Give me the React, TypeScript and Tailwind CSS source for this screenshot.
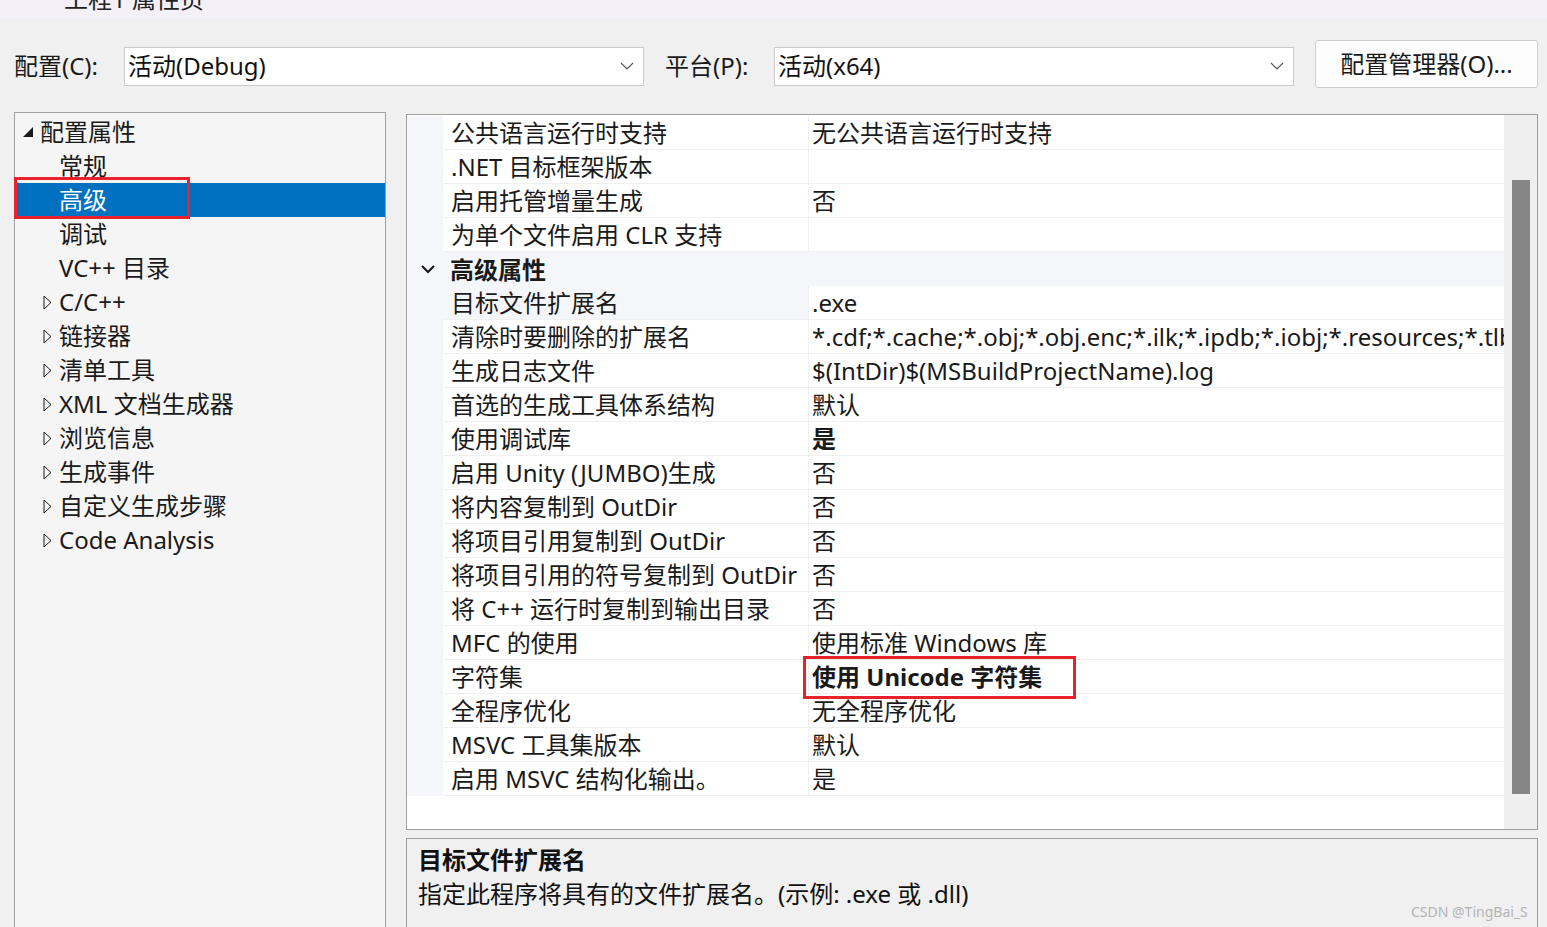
import React from "react";

const FONT = "font-['Noto_Sans','Noto_Sans_CJK_SC',sans-serif]";

type Prop = { name: string; value?: string; bold?: boolean; selected?: boolean; marked?: boolean };

const general: Prop[] = [
  { name: "公共语言运行时支持", value: "无公共语言运行时支持" },
  { name: ".NET 目标框架版本", value: "" },
  { name: "启用托管增量生成", value: "否" },
  { name: "为单个文件启用 CLR 支持", value: "" },
];

const advanced: Prop[] = [
  { name: "目标文件扩展名", value: ".exe", selected: true },
  { name: "清除时要删除的扩展名", value: "*.cdf;*.cache;*.obj;*.obj.enc;*.ilk;*.ipdb;*.iobj;*.resources;*.tlb;*.tli;*.tlh;*.tmp;*.rsp;*.pgc;*.pgd;*.meta;*.tlog;*.manifest;*.res;*.pch;*.exp;*.idb;*.rep;*.xdc;*.pdb;*_manifest.rc;*.bsc;*.sbr;*.xml;*.metagen;*.bi" },
  { name: "生成日志文件", value: "$(IntDir)$(MSBuildProjectName).log" },
  { name: "首选的生成工具体系结构", value: "默认" },
  { name: "使用调试库", value: "是", bold: true },
  { name: "启用 Unity (JUMBO)生成", value: "否" },
  { name: "将内容复制到 OutDir", value: "否" },
  { name: "将项目引用复制到 OutDir", value: "否" },
  { name: "将项目引用的符号复制到 OutDir", value: "否" },
  { name: "将 C++ 运行时复制到输出目录", value: "否" },
  { name: "MFC 的使用", value: "使用标准 Windows 库" },
  { name: "字符集", value: "使用 Unicode 字符集", bold: true, marked: true },
  { name: "全程序优化", value: "无全程序优化" },
  { name: "MSVC 工具集版本", value: "默认" },
  { name: "启用 MSVC 结构化输出。", value: "是" },
];

type TreeItem = { label: string; kind: "root" | "leaf" | "collapsed"; selected?: boolean };

const tree: TreeItem[] = [
  { label: "配置属性", kind: "root" },
  { label: "常规", kind: "leaf" },
  { label: "高级", kind: "leaf", selected: true },
  { label: "调试", kind: "leaf" },
  { label: "VC++ 目录", kind: "leaf" },
  { label: "C/C++", kind: "collapsed" },
  { label: "链接器", kind: "collapsed" },
  { label: "清单工具", kind: "collapsed" },
  { label: "XML 文档生成器", kind: "collapsed" },
  { label: "浏览信息", kind: "collapsed" },
  { label: "生成事件", kind: "collapsed" },
  { label: "自定义生成步骤", kind: "collapsed" },
  { label: "Code Analysis", kind: "collapsed" },
];

function ComboChevron() {
  return (
    <svg width="14" height="8" viewBox="0 0 14 8" className="shrink-0">
      <polyline points="1,1 7,7 13,1" fill="none" stroke="#5a5a5a" strokeWidth="1.2" />
    </svg>
  );
}

function Combo({ value }: { value: string }) {
  return (
    <div className="flex h-[39px] w-[520px] shrink-0 items-center justify-between border border-[#cacaca] bg-white pl-[3px] pr-[9px]">
      <span className="text-[24px] leading-[36px] text-[#111]">{value}</span>
      <ComboChevron />
    </div>
  );
}

function TreeRow({ item }: { item: TreeItem }) {
  const isRoot = item.kind === "root";
  return (
    <div
      className={`relative flex h-[34px] items-center ${item.selected ? "bg-[#0070c0] text-white" : "text-[#1a1a1a]"}`}
    >
      {isRoot && (
        <svg width="12" height="12" viewBox="0 0 12 12" className="ml-[7px] mr-[6px] shrink-0">
          <polygon points="11,1 11,11 1,11" fill="#1a1a1a" />
        </svg>
      )}
      {item.kind === "collapsed" && (
        <svg width="9" height="15" viewBox="0 0 9 15" className="ml-[28px] mr-[7px] shrink-0">
          <polygon points="1,1 8,7.5 1,14" fill="none" stroke="#1a1a1a" strokeWidth="1" />
        </svg>
      )}
      {item.kind === "leaf" && <span className="w-[44px] shrink-0" />}
      <span className="whitespace-nowrap text-[24px] leading-[34px]">{item.label}</span>
      {item.selected && (
        <div className="absolute left-[-1px] top-[-6px] z-10 h-[42px] w-[176px] border-[3px] border-[#e8212d]" />
      )}
    </div>
  );
}

function PropRow({ p }: { p: Prop }) {
  return (
    <div className="flex h-[34px]">
      <div className="w-[36px] shrink-0 bg-[#f4f6fa]" />
      <div
        className={`flex w-[366px] shrink-0 items-center border-b border-r border-[#f0f0f0] pl-[8px] ${p.selected ? "bg-[#f4f6fa]" : "bg-white"}`}
      >
        <span className="whitespace-nowrap text-[24px] leading-[33px] text-[#1a1a1a]">{p.name}</span>
      </div>
      <div className="relative flex min-w-0 flex-1 items-center border-b border-[#f0f0f0] bg-white pl-[3px]">
        <span
          className={`overflow-hidden whitespace-nowrap text-[24px] leading-[33px] text-[#1a1a1a] ${p.bold ? "font-bold" : ""}`}
        >
          {p.value}
        </span>
        {p.marked && (
          <div className="absolute left-[-6px] top-[-4px] z-10 h-[43px] w-[273px] border-[3px] border-[#e8212d]" />
        )}
      </div>
    </div>
  );
}

export default function App() {
  return (
    <div className={`${FONT} h-[927px] w-[1547px] overflow-hidden bg-[#f0f0f0]`}>
      {/* title strip, mostly scrolled off */}
      <div className="h-[18px] overflow-hidden bg-[#f3f1f7] pl-[64px]">
        <div className="mt-[-16px] text-[24px] leading-[30px] text-[#222]">工程1 属性页</div>
      </div>

      {/* configuration / platform bar */}
      <div className="mt-[22px] flex h-[48px] items-center pl-[14px] pt-[4px]">
        <span className="w-[110px] shrink-0 text-[24px] leading-[36px] text-[#1a1a1a]">配置(C):</span>
        <Combo value="活动(Debug)" />
        <span className="ml-[21px] w-[109px] shrink-0 text-[24px] leading-[36px] text-[#1a1a1a]">平台(P):</span>
        <Combo value="活动(x64)" />
        <button className="ml-[21px] mt-[-4px] h-[48px] w-[223px] shrink-0 rounded-[3px] border border-[#cfcfcf] bg-[#fdfdfd] text-[24px] leading-none text-[#1a1a1a]">
          配置管理器(O)...
        </button>
      </div>

      <div className="mt-[24px] flex">
        {/* left tree */}
        <div className="ml-[14px] h-[830px] w-[372px] shrink-0 border border-[#a0a0a0] bg-[#f5f5f5] pt-[2px]">
          {tree.map((t) => (
            <TreeRow key={t.label} item={t} />
          ))}
        </div>

        {/* right side */}
        <div className="ml-[20px] mt-[2px] flex w-[1132px] flex-col">
          <div className="flex h-[716px] border border-[#a0a0a0] bg-white">
            <div className="flex min-w-0 flex-1 flex-col">
              <div className="h-[1px] bg-white" />
              {general.map((p) => (
                <PropRow key={p.name} p={p} />
              ))}
              <div className="flex h-[34px] items-center bg-[#f4f6fa]">
                <svg width="16" height="10" viewBox="0 0 16 10" className="ml-[13px] mr-[14px] shrink-0">
                  <polyline points="2,2 8,8 14,2" fill="none" stroke="#1a1a1a" strokeWidth="2.2" />
                </svg>
                <span className="text-[24px] font-bold leading-[33px] text-[#1a1a1a]">高级属性</span>
              </div>
              {advanced.map((p) => (
                <PropRow key={p.name} p={p} />
              ))}
              <div className="flex-1 bg-white" />
            </div>
            {/* scrollbar */}
            <div className="flex w-[33px] shrink-0 justify-center bg-[#efefef] pt-[65px]">
              <div className="h-[614px] w-[18px] bg-[#868686]" />
            </div>
          </div>

          {/* description */}
          <div className="relative mt-[8px] h-[120px] border border-[#a0a0a0] bg-[#f0f0f0] pl-[11px] pt-[3px]">
            <div className="flex h-[34px] items-center text-[24px] font-bold leading-[33px] text-[#111]">目标文件扩展名</div>
            <div className="flex h-[34px] items-center text-[24px] leading-[33px] text-[#111]">
              指定此程序将具有的文件扩展名。(示例: .exe 或 .dll)
            </div>
            <span className="absolute left-[1004px] top-[64px] text-[14px] leading-[18px] text-[#b4b4b4]">CSDN @TingBai_S</span>
          </div>
        </div>
      </div>
    </div>
  );
}
